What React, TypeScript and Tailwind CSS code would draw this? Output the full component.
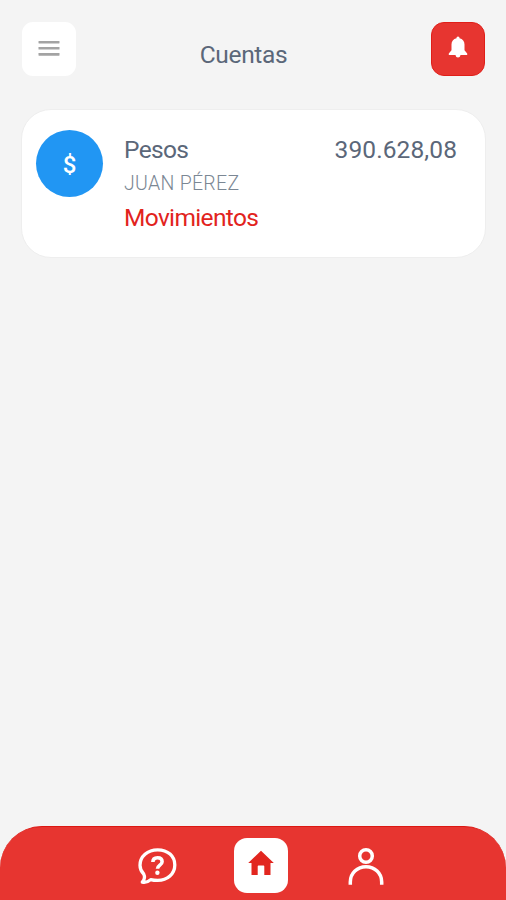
function MenuIcon() {
  return (
    <svg width="22" height="16" viewBox="0 0 22 16" fill="#a3a3a3">
      <rect x="0.5" y="0.9" width="21" height="2.6" rx="0.4" />
      <rect x="0.5" y="7" width="21" height="2.6" rx="0.4" />
      <rect x="0.5" y="13.1" width="21" height="2.6" rx="0.4" />
    </svg>
  );
}

function BellIcon() {
  return (
    <svg width="20" height="22" viewBox="0 0 20 22" fill="white">
      <path d="M10 0.6c-1 0-1.500.8-1.500 1.700C5.300 3 3.500 5.300 3.500 8.500v5.700L.8 17.500v1.500h18.400v-1.500l-2.700-3.300v-5.700c0-3.200-1.800-5.500-5-6.200 0-.9-.5-1.700-1.500-1.700zM7.500 19c.3 1.700 1.200 2.500 2.500 2.500s2.200-.8 2.500-2.500z" />
    </svg>
  );
}

function HelpIcon() {
  return (
    <svg width="40" height="38" viewBox="0 0 40 38" fill="none" stroke="white" strokeWidth="3.300" strokeLinecap="round" strokeLinejoin="round">
      <path d="M6.700 27C4.300 24.500 3 21.400 3 18.200 3 9.300 10.500 2.800 20.700 2.800S37.800 9.200 37.800 18 30.500 33.400 20.700 33.400c-3.100 0-5.100-.3-7-.8-2.400 2.200-5.300 3.200-8.400 2.600 1.900-2.200 3.100-4.900 1.400-8.200z" />
      <path d="M15.900 15.100c0-2.800 1.800-4.300 4.600-4.300s4.600 1.500 4.600 3.900c0 3.400-4.600 3.400-4.600 7" strokeWidth="3.600" strokeLinecap="butt" />
      <circle cx="20.400" cy="25.700" r="2.200" fill="white" stroke="none" />
    </svg>
  );
}

function HomeIcon() {
  return (
    <svg width="26" height="26" viewBox="0 0 26 26" fill="#e2261f">
      <path d="M13 .8.2 12.900h3.300v12.200h6.200v-8.600c0-.6.400-1 1-1h4.600c.6 0 1 .4 1 1v8.600h6.200V12.900h3.300z" />
    </svg>
  );
}

function UserIcon() {
  return (
    <svg width="36" height="38" viewBox="0 0 36 38" fill="none" stroke="white" strokeWidth="3.500">
      <circle cx="18" cy="9" r="6.300" />
      <path d="M2.300 36v-1C2.300 26 9.300 19.700 18 19.700S33.700 26 33.700 35v1" strokeLinecap="square" />
    </svg>
  );
}

export default function App() {
  return (
    <div className="flex h-[900px] w-[506px] flex-col overflow-hidden bg-[#f4f4f4] font-['Roboto','Liberation_Sans',sans-serif] whitespace-nowrap text-[#5b6779]">
      <header className="flex items-start justify-between pt-[22px] pr-[21px] pl-[22px]">
        <button aria-label="Menú" className="flex h-[54px] w-[54px] items-start justify-center rounded-[11px] bg-white pt-[18px]">
          <MenuIcon />
        </button>
        <h1 className="mr-[20px] pt-[18px] text-[24.500px] leading-[30px] tracking-[-0.350px]">Cuentas</h1>
        <button aria-label="Notificaciones" className="flex h-[54px] w-[54px] items-start justify-center rounded-[13px] border border-[#e01e18] bg-[#e73530] pt-[13px]">
          <BellIcon />
        </button>
      </header>
      <main className="flex-1 pt-[33px] pr-5 pl-[21px]">
        <section className="flex h-[149px] rounded-[30px] border border-[#eeeeee] bg-white pt-5 pr-[28px] pl-[14px]">
          <div className="flex h-[67px] w-[67px] shrink-0 items-center justify-center rounded-full bg-[#2196f3] pt-[2px] text-[24px] font-medium text-white">$</div>
          <div className="ml-[21px] flex-1">
            <div className="flex h-[39px] items-center justify-between text-[24.500px] leading-[39px]">
              <h2 className="tracking-[-0.650px]">Pesos</h2>
              <span className="tracking-[0.100px]">390.628,08</span>
            </div>
            <p className="h-[29px] text-[19.500px] leading-[29px] font-light tracking-[0.300px] text-[#7b8794]">JUAN PÉREZ</p>
            <a className="block text-[24.500px] leading-[39px] tracking-[-0.650px] text-[#e2231d]">Movimientos</a>
          </div>
        </section>
      </main>
      <nav className="flex h-[74px] items-start rounded-t-[42px] border-t border-[#dc1712] bg-[#e73530] pl-[137px]">
        <button aria-label="Ayuda" className="mt-[20px]">
          <HelpIcon />
        </button>
        <button aria-label="Inicio" className="mt-[11px] ml-[57px] flex h-[55px] w-[54px] items-start justify-center rounded-[13px] bg-white pt-[12px]">
          <HomeIcon />
        </button>
        <button aria-label="Perfil" className="mt-[20px] ml-[60px]">
          <UserIcon />
        </button>
      </nav>
    </div>
  );
}
